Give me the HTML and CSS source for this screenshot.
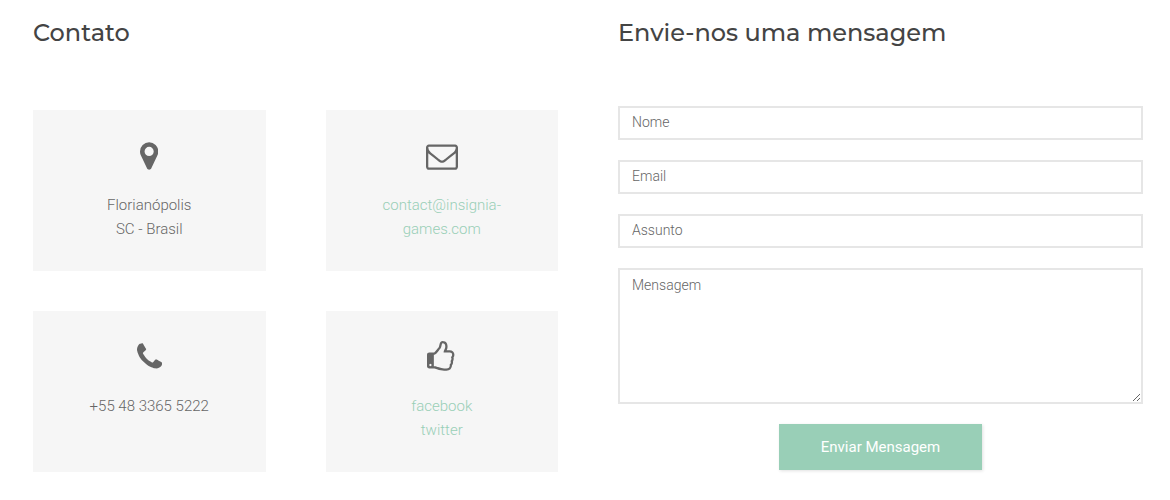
FILE: index.html
```html
<!DOCTYPE html>
<html lang="pt-BR">
<head>
<meta charset="utf-8">
<meta name="viewport" content="width=device-width, initial-scale=1">
<title>Contato</title>
<link rel="stylesheet" href="styles.css">
</head>
<body>
<main class="contact">
  <section class="column">
    <h2 class="title">Contato</h2>
    <div class="cards">
      <div class="card">
        <svg class="icon" viewBox="0 0 1024 1792" aria-hidden="true"><g transform="translate(0 1536) scale(1 -1)"><path d="M768 896q0 106-75 181t-181 75-181-75-75-181 75-181 181-75 181 75 75 181zM1024 896q0-109-33-179l-364-774q-16-33-47.5-52t-67.5-19-67.5 19-46.5 52l-365 774q-33 70-33 179 0 212 150 362t362 150 362-150 150-362z"/></g></svg>
        <p class="text">Florianópolis<br>SC - Brasil</p>
      </div>
      <div class="card">
        <svg class="icon" viewBox="0 0 1792 1792" aria-hidden="true"><g transform="translate(0 1536) scale(1 -1)"><path d="M1664 32v768q-32-36-69-66-268-206-426-338-51-43-83-67t-86.500-48.500-102.500-24.500h-2q-48 0-102.500 24.500t-86.500 48.500-83 67q-158 132-426 338-37 30-69 66v-768q0-13 9.500-22.500t22.500-9.500h1472q13 0 22.500 9.500t9.500 22.500zM1664 1083v24.500t-.5 13-3 12.500-5.500 9-9 7.500-14 2.500h-1472q-13 0-22.500-9.500t-9.500-22.500q0-168 147-284 193-152 401-317 6-5 35-29.500t46-37.500 44.500-31.500 50.500-27.500 43-9h2q20 0 43 9t50.500 27.500 44.500 31.500 46 37.500 35 29.500q208 165 401 317 54 43 100.500 115.500t46.500 131.500zM1792 1120v-1088q0-66-47-113t-113-47h-1472q-66 0-113 47t-47 113v1088q0 66 47 113t113 47h1472q66 0 113-47t47-113z"/></g></svg>
        <p class="text"><a class="link" href="mailto:contact@insignia-games.com">contact@insignia-games.com</a></p>
      </div>
      <div class="card">
        <svg class="icon" viewBox="0 0 1408 1792" aria-hidden="true"><g transform="translate(0 1536) scale(1 -1)"><path d="M1408 296q0-27-10-70.500t-21-68.500q-21-50-122-106-94-51-186-51-27 0-52.500 3.500t-57.500 12.500-47.500 14.500-55.500 20.500-49 18q-98 35-175 83-128 79-264.500 215.500t-215.500 264.500q-48 77-83 175-3 9-18 49t-20.500 55.500-14.500 47.500-12.500 57.500-3.500 52.500q0 92 51 186 56 101 106 122 25 11 68.500 21t70.500 10q14 0 21-3 18-6 53-76 11-19 30-54t35-63.500 31-53.500q3-4 17.500-25t21.500-35.500 7-28.500q0-20-28.500-50t-62-55-62-53-28.500-46q0-9 5-22.500t8.500-20.500 14-24 11.500-19q76-137 174-235t235-174q2-1 19-11.500t24-14 20.500-8.500 22.500-5q18 0 46 28.500t53 62 55 62 50 28.500q14 0 28.500-7t35.500-21.500 25-17.500q25-15 53.500-31t63.500-35 54-30q70-35 76-53 3-7 3-21z"/></g></svg>
        <p class="text">+55 48 3365 5222</p>
      </div>
      <div class="card">
        <svg class="icon" viewBox="0 0 1664 1792" aria-hidden="true"><g transform="translate(0 1536) scale(1 -1)"><path d="M256 192q0 26-19 45t-45 19-45-19-19-45 19-45 45-19 45 19 19 45zM1408 768q0 51-39 89.500t-89 38.500h-352q0 58 48 159.500t48 160.500q0 98-32 145t-128 47q-26-26-38-85t-30.500-125.500-59.500-109.500q-22-23-77-91-4-5-23-30t-31.500-41-34.500-42.500-40-44-38.500-35.500-40-27-35.500-9h-32v-640h32q13 0 31.500-3t33-6.500 38-11 35-11.500 35.500-12.500 29-10.500q211-73 342-73h121q192 0 192 167 0 26-5 56 30 16 47.500 52.500t17.500 73.500-18 69q53 50 53 119 0 25-10 55.500t-25 47.500q32 1 53.500 47t21.500 81zM1536 769q0-89-49-163 9-33 9-69 0-77-38-144 3-21 3-43 0-101-60-178 1-139-85-219.500t-227-80.500h-129q-96 0-189.500 22.500t-216.500 65.500q-116 40-138 40h-288q-53 0-90.500 37.500t-37.500 90.500v640q0 53 37.500 90.500t90.500 37.500h274q36 24 137 155 58 75 107 128 24 25 35.500 85.500t30.500 126.500 62 108q39 37 90 37 84 0 151-32.500t102-101.500 35-186q0-93-48-192h176q104 0 180-76t76-179z"/></g></svg>
        <p class="text"><a class="link" href="#facebook">facebook</a><br><a class="link" href="#twitter">twitter</a></p>
      </div>
    </div>
  </section>
  <section class="column">
    <h2 class="title">Envie-nos uma mensagem</h2>
    <form class="form">
      <input class="field" type="text" name="nome" placeholder="Nome" aria-label="Nome">
      <input class="field" type="email" name="email" placeholder="Email" aria-label="Email">
      <input class="field" type="text" name="assunto" placeholder="Assunto" aria-label="Assunto">
      <textarea class="field message" name="mensagem" placeholder="Mensagem" aria-label="Mensagem"></textarea>
      <button class="submit" type="submit">Enviar Mensagem</button>
    </form>
  </section>
</main>
</body>
</html>
```

FILE: styles.css
```css
* {
  box-sizing: border-box;
}

body {
  margin: 0;
  background: #fff;
  color: #666;
  font: 300 15px/24px Roboto, "Liberation Sans", sans-serif;
}

.contact {
  display: grid;
  grid-template-columns: 1fr 1fr;
  gap: 60px;
  padding: 18px 27px 28px 33px;
}

.title {
  margin: 0;
  color: #444;
  font: 500 24px/30px Montserrat, Inter, sans-serif;
}

.cards {
  display: grid;
  grid-template-columns: 1fr 1fr;
  gap: 40px 60px;
  margin-top: 62px;
}

.card {
  display: flex;
  flex-direction: column;
  align-items: center;
  gap: 21px;
  min-height: 161px;
  padding: 30px 40px;
  background: #f6f6f6;
  text-align: center;
}

.icon {
  display: block;
  height: 32px;
  fill: #666;
}

.text {
  margin: 0;
}

.link {
  color: #99cfb7;
  text-decoration: none;
}

.form {
  display: flex;
  flex-direction: column;
  gap: 20px;
  margin-top: 58px;
}

.field {
  width: 100%;
  height: 34px;
  margin: 0;
  padding: 4px 12px 6px;
  border: 2px solid #e6e6e6;
  border-radius: 0;
  background: #fff;
  color: #666;
  font: 300 14px/20px Roboto, "Liberation Sans", sans-serif;
}

.field::placeholder {
  color: #666;
  opacity: 1;
}

.message {
  height: 136px;
  padding: 5px 12px;
  resize: vertical;
}

.submit {
  align-self: center;
  padding: 11px 42px;
  border: 0;
  background: #99cfb7;
  box-shadow: 1px 1px 3px rgba(0, 0, 0, 0.12);
  color: #fff;
  font: 400 15px/24px Roboto, "Liberation Sans", sans-serif;
  cursor: pointer;
}
```
